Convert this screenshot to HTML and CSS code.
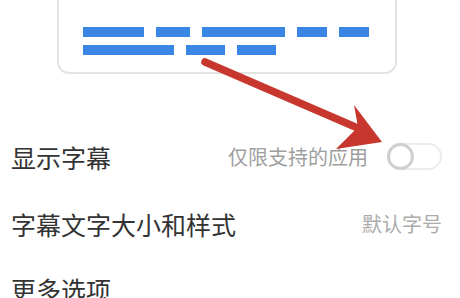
FILE: index.html
```html
<!DOCTYPE html>
<html lang="zh-CN">
<head>
    <meta charset="UTF-8">
    <meta name="viewport" content="width=device-width, initial-scale=1.0">
    <title>字幕设置</title>
    <link rel="stylesheet" href="styles.css">
</head>
<body>
    <div class="page">
        <!-- 字幕预览 -->
        <div class="preview">
            <div class="bar-row">
                <span class="bar w61"></span>
                <span class="bar w34"></span>
                <span class="bar w83"></span>
                <span class="bar w30"></span>
                <span class="bar w30"></span>
            </div>
            <div class="bar-row">
                <span class="bar w91"></span>
                <span class="bar w39"></span>
                <span class="bar w39"></span>
            </div>
        </div>

        <ul class="settings">
            <li class="setting">
                <span class="setting-title">显示字幕</span>
                <span class="setting-side">
                    <span class="setting-hint">仅限支持的应用</span>
                    <span class="switch"><span class="knob"></span></span>
                </span>
            </li>
            <li class="setting">
                <span class="setting-title">字幕文字大小和样式</span>
                <span class="setting-value">默认字号</span>
            </li>
            <li class="setting">
                <span class="setting-title">更多选项</span>
            </li>
        </ul>

        <!-- 红色箭头标注 -->
        <svg class="arrow" width="460" height="298" viewBox="0 0 460 298">
            <line x1="205" y1="62" x2="360" y2="129" stroke="#c8372d" stroke-width="7.5" stroke-linecap="round"/>
            <polygon points="382,142 354,105 358,127 336,149" fill="#c8372d"/>
        </svg>
    </div>
</body>
</html>
```

FILE: styles.css
```css
body {
    margin: 0;
    padding: 0;
    background-color: #fff;
    font-family: "Noto Sans CJK SC", "Noto Sans", sans-serif;
    color: #333;
}

.page {
    position: relative;
    width: 460px;
    height: 298px;
    overflow: hidden;
}

.preview {
    box-sizing: border-box;
    width: 340px;
    height: 94px;
    margin: -20px 0 0 57px;
    padding: 47px 0 0 24px;
    border: 2px solid #e3e3e3;
    border-top: none;
    border-radius: 0 0 12px 12px;
    display: flex;
    flex-direction: column;
    gap: 8px;
}

.bar-row {
    display: flex;
    gap: 12px;
}

.bar {
    display: block;
    height: 10px;
    background-color: #3a86e4;
}

.w30 { width: 30px; }
.w34 { width: 34px; }
.w39 { width: 39px; }
.w61 { width: 61px; }
.w83 { width: 83px; }
.w91 { width: 91px; }

.settings {
    list-style: none;
    margin: 49px 0 0 0;
    padding: 0;
}

.setting {
    height: 67px;
    display: flex;
    align-items: center;
    justify-content: space-between;
    padding: 0 18px 0 11px;
}

.setting:last-child {
    height: 63px;
}

.setting-title {
    font-size: 25px;
    color: #333;
}

.setting-side {
    display: flex;
    align-items: center;
    gap: 19px;
}

.setting-hint {
    font-size: 20px;
    color: #9e9e9e;
}

.setting-value {
    font-size: 20px;
    color: #ababab;
}

.switch {
    box-sizing: border-box;
    width: 55px;
    height: 27px;
    border: 2px solid #ececec;
    border-radius: 14px;
    display: flex;
    align-items: center;
}

.knob {
    box-sizing: border-box;
    width: 27px;
    height: 27px;
    margin-left: -2px;
    border: 3px solid #cfcfcf;
    border-radius: 50%;
    background-color: #fff;
}

.arrow {
    position: absolute;
    top: 0;
    left: 0;
    pointer-events: none;
}
```
